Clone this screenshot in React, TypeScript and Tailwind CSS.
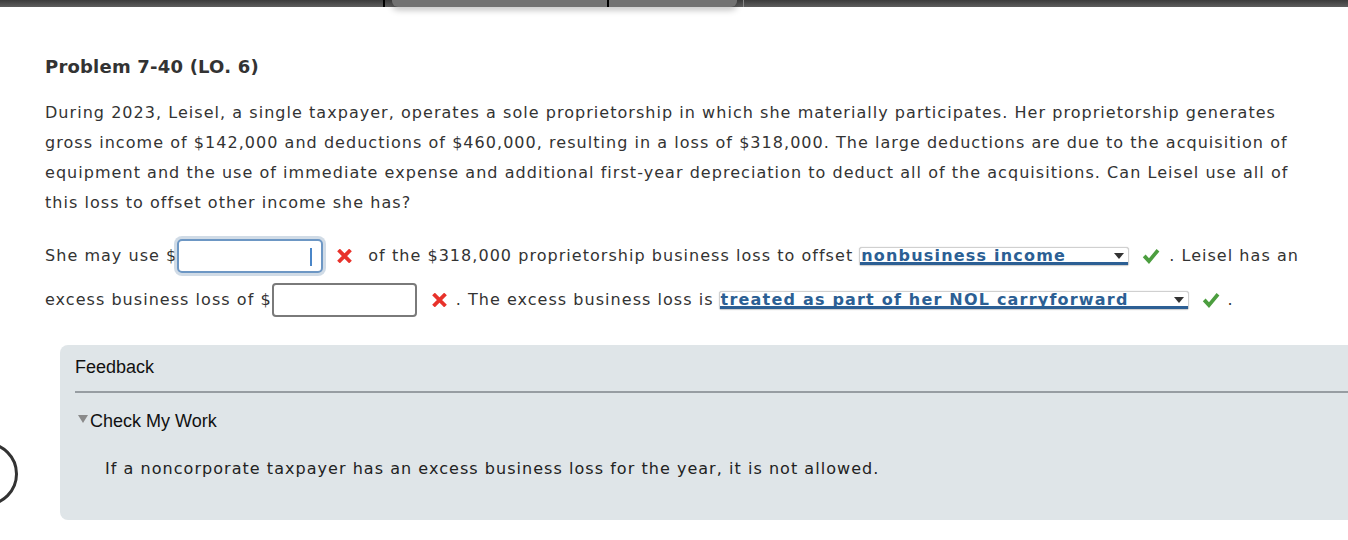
import React from "react";

const body = { fontFamily: '"DejaVu Sans", Verdana, sans-serif' };
const arial = { fontFamily: '"Liberation Sans", Arial, sans-serif' };

function RedX() {
  return (
    <svg width="15" height="14" viewBox="0 0 15 14" className="shrink-0">
      <path d="M1.5 1 L13.5 13 M13.5 1 L1.5 13" stroke="#e8322b" strokeWidth="3.8" strokeLinecap="butt" />
    </svg>
  );
}

function Check() {
  return (
    <svg width="18" height="17" viewBox="0 0 18 17" className="shrink-0">
      <path d="M0.8 9.2 L3.6 6.6 L7 10.2 L14.6 1 L17.4 3.4 L7 16 Z" fill="#4c9e3f" />
    </svg>
  );
}

function Dropdown({ label, width }: { label: string; width: string }) {
  return (
    <span className={`relative inline-flex items-center h-[19px] bg-white rounded-[3px] border border-[#d0d0d0] shadow-[0_0_1px_rgba(0,0,0,0.3)] ${width}`}>
      <span className="flex-1 h-full border-b-[3px] border-[#2c5f94] text-[#2c5f94] font-bold text-[16px] leading-[16px] tracking-[1.2px] pl-[1px] whitespace-nowrap">
        {label}
      </span>
      <svg width="10" height="6" viewBox="0 0 10 6" className="absolute right-[4px] top-[5px]">
        <path d="M0 0 H10 L5 6 Z" fill="#333" />
      </svg>
    </span>
  );
}

export default function App() {
  return (
    <div className="relative w-[1348px] h-[540px] overflow-hidden bg-white text-[#333]" style={body}>
      {/* top strip */}
      <div className="flex h-[7px] bg-gradient-to-b from-[#3c3c3c] to-[#5e5e5e]">
        <div className="w-[383px]" />
        <div className="w-[2px] h-[7px] bg-black" />
        <div className="w-[7px]" />
        <div className="relative flex w-[345px] h-[7px] bg-[#727272] rounded-b-[6px] shadow-[0_3px_6px_rgba(0,0,0,0.25)]">
          <div className="w-[215px]" />
          <div className="w-[2px] h-[7px] bg-black" />
        </div>
        <div className="w-[6px]" />
        <div className="w-[1px] h-[7px] bg-[#888]" />
      </div>

      <div className="pl-[45px] pr-[40px]">
        <h2 className="mt-[49px] text-[18px] leading-[22px] font-bold tracking-[0.2px] text-[#333]">Problem 7-40 (LO. 6)</h2>

        <p className="mt-[20px] text-[16px] leading-[30px] tracking-[1.04px] w-[1260px]">
          During 2023, Leisel, a single taxpayer, operates a sole proprietorship in which she materially participates. Her proprietorship generates gross income of $142,000 and deductions of $460,000, resulting in a loss of $318,000. The large deductions are due to the acquisition of equipment and the use of immediate expense and additional first-year depreciation to deduct all of the acquisitions. Can Leisel use all of this loss to offset other income she has?
        </p>

        <div className="mt-[20px] flex items-center h-[36px] text-[16px] tracking-[1.04px] whitespace-nowrap">
          <span>She may use $</span>
          <span className="relative flex items-center w-[146px] h-[34px] rounded-[5px] border-2 border-[#6d97c4] shadow-[0_0_0_3px_rgba(150,175,200,0.45)] bg-white">
            <span className="absolute right-[9px] top-[7px] w-[2px] h-[18px] bg-[#4a86c8]" />
          </span>
          <span className="ml-[14px]"><RedX /></span>
          <span className="ml-[16px]">of the $318,000 proprietorship business loss to offset</span>
          <span className="ml-[6px]"><Dropdown label="nonbusiness income" width="w-[270px]" /></span>
          <span className="ml-[13px]"><Check /></span>
          <span className="ml-[9px]">. Leisel has an</span>
        </div>

        <div className="mt-[8px] flex items-center h-[36px] text-[16px] tracking-[1.04px] whitespace-nowrap">
          <span>excess business loss of $</span>
          <span className="w-[145px] h-[34px] rounded-[4px] border-2 border-[#7a7a7a] bg-white" />
          <span className="ml-[15px]"><RedX /></span>
          <span className="ml-[9px]">. The excess business loss is</span>
          <span className="ml-[5px]"><Dropdown label="treated as part of her NOL carryforward" width="w-[470px]" /></span>
          <span className="ml-[13px]"><Check /></span>
          <span className="ml-[8px]">.</span>
        </div>
      </div>

      <div className="ml-[60px] mt-[27px] w-[1320px] h-[175px] bg-[#dfe5e8] rounded-[8px] pl-[15px]">
        <div className="pt-[11px] h-[46px] text-[18px] leading-[22px] text-[#111]" style={arial}>Feedback</div>
        <div className="h-[2px] bg-[#979da2]" />
        <div className="mt-[17px] flex items-center text-[18px] leading-[22px] text-[#111]" style={arial}>
          <svg width="12" height="10" viewBox="0 0 12 10" className="ml-[2px] mr-[1px] -mt-[4px]">
            <path d="M1 1 H11 L6 9 Z" fill="#8a8a8a" />
          </svg>
          <span>Check My Work</span>
        </div>
        <p className="mt-[27px] pl-[30px] text-[16px] leading-[20px] tracking-[1.04px] text-[#222]">
          If a noncorporate taxpayer has an excess business loss for the year, it is not allowed.
        </p>
      </div>

      {/* partial circle at left edge */}
      <div className="absolute left-[-46px] top-[442px] w-[64px] h-[64px] rounded-full border-[3px] border-[#333]" />
    </div>
  );
}
